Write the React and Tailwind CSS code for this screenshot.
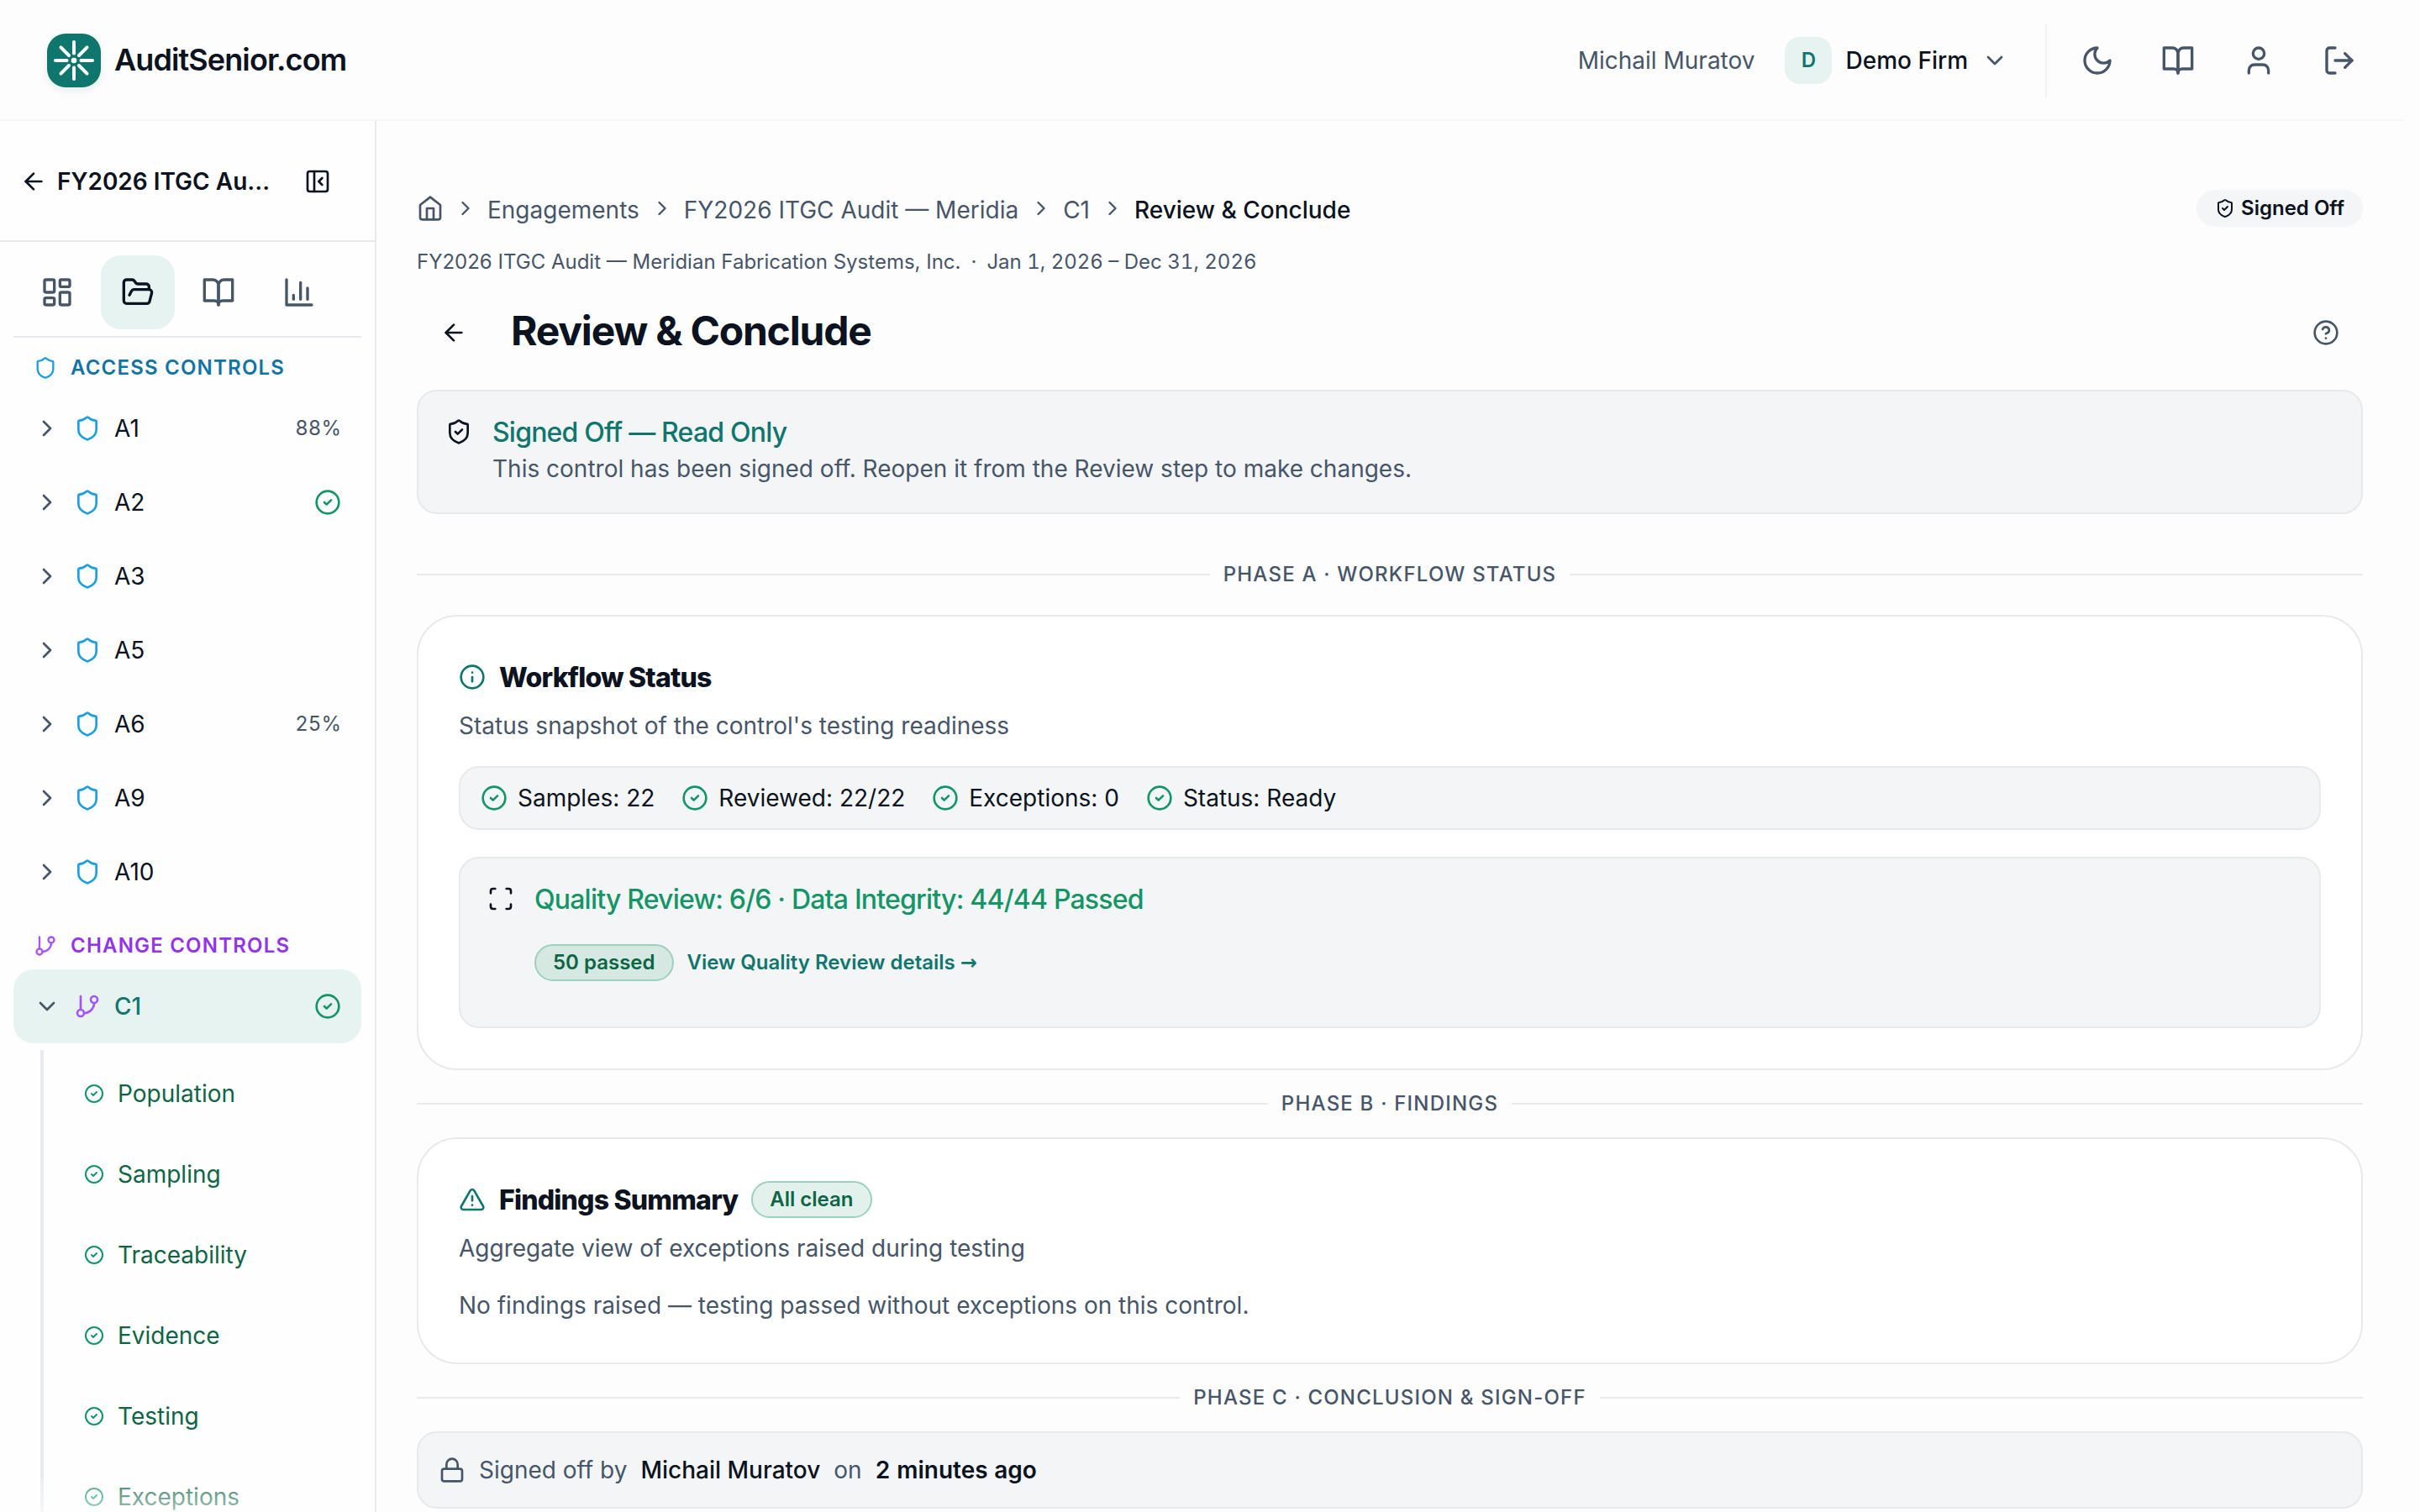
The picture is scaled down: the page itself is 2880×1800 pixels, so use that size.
import {
  ArrowLeft,
  ChevronDown,
  ChevronRight,
  CircleCheck,
  CircleQuestionMark,
  FolderOpen,
  Info,
  LayoutDashboard,
  Lock,
  LogOut,
  PanelLeftClose,
  Scan,
  Shield,
  ShieldCheck,
  TriangleAlert,
  User,
} from "lucide-react";

const accessControls = [
  { id: "A1", progress: "88%" },
  { id: "A2", done: true },
  { id: "A3" },
  { id: "A5" },
  { id: "A6", progress: "25%" },
  { id: "A9" },
  { id: "A10" },
];

const steps = [
  "Population",
  "Sampling",
  "Traceability",
  "Evidence",
  "Testing",
  "Exceptions",
];

const crumbs = ["Engagements", "FY2026 ITGC Audit — Meridia", "C1"];

const stats = ["Samples: 22", "Reviewed: 22/22", "Exceptions: 0", "Status: Ready"];

function Icon({ className, children }) {
  return (
    <svg
      viewBox="0 0 24 24"
      className={`shrink-0 ${className}`}
      fill="none"
      stroke="currentColor"
      strokeWidth="2"
      strokeLinecap="round"
      strokeLinejoin="round"
    >
      {children}
    </svg>
  );
}

function BookIcon({ className }) {
  return (
    <Icon className={className}>
      <path d="M2 3h6a4 4 0 0 1 4 4v14a3 3 0 0 0-3-3H2z" />
      <path d="M22 3h-6a4 4 0 0 0-4 4v14a3 3 0 0 1 3-3h7z" />
    </Icon>
  );
}

function MoonIcon({ className }) {
  return (
    <Icon className={className}>
      <path d="M12 3a6 6 0 0 0 9 9 9 9 0 1 1-9-9Z" />
    </Icon>
  );
}

function HomeIcon({ className }) {
  return (
    <Icon className={className}>
      <path d="m3 9 9-7 9 7v11a2 2 0 0 1-2 2H5a2 2 0 0 1-2-2z" />
      <path d="M9 22V12h6v10" />
    </Icon>
  );
}

function ChartIcon({ className }) {
  return (
    <Icon className={className}>
      <path d="M3 3v18h18" />
      <path d="M18 17V9" />
      <path d="M13 17V5" />
      <path d="M8 17v-3" />
    </Icon>
  );
}

function BranchIcon({ className }) {
  return (
    <Icon className={className}>
      <path d="M6 3v12" />
      <circle cx="18" cy="6" r="3" />
      <circle cx="6" cy="18" r="3" />
      <path d="M18 9a9 9 0 0 1-9 9" />
    </Icon>
  );
}

function Logo() {
  return (
    <div className="size-16 rounded-[22px] bg-[#0f766e] shadow-[0_4px_10px_rgba(15,23,42,0.08)]">
      <svg viewBox="0 0 64 64" className="size-16" fill="none" stroke="white" strokeWidth="4" strokeLinecap="round">
        {[0, 45, 90, 135, 180, 225, 270, 315].map((angle) => (
          <line key={angle} x1="32" y1="10" x2="32" y2="23.5" transform={`rotate(${angle} 32 32)`} />
        ))}
        <circle cx="32" cy="32" r="3.3" fill="white" stroke="none" />
      </svg>
    </div>
  );
}

function Header() {
  return (
    <header className="flex h-36 w-[2860px] shrink-0 items-center justify-between pl-14 pr-8 shadow-[inset_0_-2px_0_#f5f5f6]">
      <div className="flex items-center gap-4">
        <Logo />
        <span className="pb-0.5 text-[36px] font-semibold tracking-tight text-[#0b1220]">
          AuditSenior.com
        </span>
      </div>
      <div className="flex items-center">
        <span className="mr-9 text-[28px] text-[#475569]">Michail Muratov</span>
        <span className="flex size-14 items-center justify-center rounded-[18px] bg-[#e7f3f1] text-2xl font-semibold text-[#0f766e]">
          D
        </span>
        <span className="ml-4 mr-4 text-[28px] font-medium text-[#0b1220]">Demo Firm</span>
        <ChevronDown className="size-8 text-[#475569]" />
        <div className="ml-11 mr-4 h-22 w-0.5 bg-[#f1f2f4]" />
        <div className="flex gap-2 text-[#475569]">
          {[MoonIcon, BookIcon, User, LogOut].map((ActionIcon, i) => (
            <button key={i} className="flex size-22 items-center justify-center">
              <ActionIcon className="size-10" />
            </button>
          ))}
        </div>
      </div>
    </header>
  );
}

function SectionLabel({ icon: LabelIcon, iconColor, color, children }) {
  return (
    <div className={`flex h-14 items-center gap-4 pl-6 text-2xl font-semibold tracking-[0.05em] uppercase ${color}`}>
      <LabelIcon className={`size-7 ${iconColor}`} />
      {children}
    </div>
  );
}

function Sidebar() {
  return (
    <aside className="relative flex w-112 shrink-0 flex-col overflow-hidden border-r-2 border-[#e7e9eb] bg-[#fefefe]">
      <div className="flex h-36 shrink-0 items-center border-b-2 border-[#e7e9eb] pt-0.5 pl-6">
        <ArrowLeft className="size-8 text-[#0b1220]" />
        <span className="ml-3 w-[256px] text-[28px] font-semibold whitespace-nowrap text-[#0b1220]">
          FY2026 ITGC Au...
        </span>
        <PanelLeftClose className="ml-[38px] size-8 text-[#0b1220]" />
      </div>
      <nav className="px-4 pt-4">
        <div className="flex gap-2 border-b-2 border-[#e7e9ee] px-2 pb-2 text-[#475569]">
          {[LayoutDashboard, FolderOpen, BookIcon, ChartIcon].map((TabIcon, i) => (
            <button
              key={i}
              className={`flex size-22 items-center justify-center rounded-3xl ${
                i === 1 ? "bg-[#e7f3f1] text-[#0b1220]" : ""
              }`}
            >
              <TabIcon className="size-10" />
            </button>
          ))}
        </div>
        <div className="pt-2">
          <SectionLabel icon={Shield} iconColor="text-[#1c9fe0]" color="text-[#1174a4]">
            Access Controls
          </SectionLabel>
          {accessControls.map(({ id, progress, done }) => (
            <div key={id} className="flex h-22 items-center gap-4 px-6">
              <ChevronRight className="size-8 text-[#475569]" />
              <Shield className="size-8 text-[#1c9fe0]" />
              <span className="flex-1 text-[28px] text-[#0b1220]">{id}</span>
              {progress && (
                <span className="text-2xl text-[#475569] tabular-nums">{progress}</span>
              )}
              {done && <CircleCheck className="size-8 text-[#139566]" />}
            </div>
          ))}
        </div>
        <div className="pt-4">
          <SectionLabel icon={BranchIcon} iconColor="text-[#a855f7]" color="text-[#9333ea]">
            Change Controls
          </SectionLabel>
          <div className="flex h-22 items-center gap-4 rounded-3xl bg-[#e7f3f1] px-6">
            <ChevronDown className="size-8 text-[#475569]" />
            <BranchIcon className="size-8 text-[#a855f7]" />
            <span className="flex-1 text-[28px] font-medium text-[#0f766e]">C1</span>
            <CircleCheck className="size-8 text-[#139566]" />
          </div>
          <div className="mt-2 ml-8 flex flex-col gap-2 border-l-4 border-[#e8eaef] pt-2 pl-12">
            {steps.map((step) => (
              <div key={step} className="flex h-22 items-center gap-4">
                <CircleCheck className="size-6 text-[#139566]" />
                <span className="text-[28px] text-[#0d6546]">{step}</span>
              </div>
            ))}
          </div>
        </div>
      </nav>
      <div className="absolute inset-x-0 bottom-0 h-10 bg-linear-to-b from-[#fefefe]/20 to-[#fefefe]/60" />
    </aside>
  );
}

function PhaseDivider({ children, className }) {
  return (
    <div className={`flex h-8 items-center gap-4 ${className}`}>
      <div className="h-0.5 flex-1 bg-[#e7e9eb]" />
      <span className="text-2xl font-medium tracking-[0.05em] text-[#475569] uppercase">
        {children}
      </span>
      <div className="h-0.5 flex-1 bg-[#e7e9eb]" />
    </div>
  );
}

function SuccessBadge({ children, className }) {
  return (
    <span
      className={`flex h-11 items-center rounded-full border-2 border-[#9bd1bd] px-5 text-2xl font-semibold text-[#0d6546] ${className}`}
    >
      {children}
    </span>
  );
}

function Main() {
  return (
    <main className="flex w-[2412px] flex-col px-12 pt-[82px]">
      <div className="flex h-11 items-center justify-between">
        <div className="flex items-center gap-3 text-[28px] text-[#475569]">
          <HomeIcon className="size-8" />
          {crumbs.map((crumb) => (
            <div key={crumb} className="flex items-center gap-3">
              <ChevronRight className="size-7" />
              <span className="pt-1 pr-px">{crumb}</span>
            </div>
          ))}
          <ChevronRight className="size-7" />
          <span className="pt-1 font-medium text-[#0b1220]">Review &amp; Conclude</span>
        </div>
        <span className="flex h-11 items-center gap-[7px] rounded-full bg-[#f3f5f7] px-[22px] text-2xl font-semibold text-[#0b1220]">
          <ShieldCheck className="size-6" />
          Signed Off
        </span>
      </div>
      <p className="mt-[26px] text-2xl text-[#475569]">
        FY2026 ITGC Audit — Meridian Fabrication Systems, Inc.
        <span className="mx-3">·</span>
        <span className="tabular-nums">Jan 1, 2026 – Dec 31, 2026</span>
      </p>
      <div className="mt-6 flex h-22 items-center">
        <button className="flex size-22 items-center justify-center">
          <ArrowLeft className="size-8 text-[#0b1220]" />
        </button>
        <h1 className="ml-6 flex-1 pb-1 text-5xl font-bold tracking-tight text-[#0b1220]">
          Review &amp; Conclude
        </h1>
        <button className="flex size-22 items-center justify-center">
          <CircleQuestionMark className="size-8 text-[#475569]" />
        </button>
      </div>

      <div className="mt-6 flex h-37 gap-6 rounded-3xl border-2 border-[#e7e9eb] bg-[#f3f5f7] p-8">
        <ShieldCheck className="size-8 text-[#0b1220]" />
        <div>
          <h2 className="text-[32px] leading-[34px] font-medium tracking-tight text-[#0f766e]">
            Signed Off — Read Only
          </h2>
          <p className="mt-1.5 text-[28px] leading-10 text-[#475569]">
            This control has been signed off. Reopen it from the Review step to make changes.
          </p>
        </div>
      </div>

      <PhaseDivider className="mt-14 mb-8">Phase A · Workflow Status</PhaseDivider>

      <section className="rounded-[48px] border-2 border-[#e7e9eb] bg-white p-12">
        <div className="flex h-12 items-center gap-4">
          <Info className="size-8 text-[#0f766e]" />
          <h3 className="pt-px text-[32px] font-extrabold tracking-tight text-[#0b1220]">Workflow Status</h3>
        </div>
        <p className="mt-2.5 text-[28px] leading-12 text-[#475569]">
          Status snapshot of the control's testing readiness
        </p>
        <div className="mt-6 flex h-19 items-center gap-8 rounded-3xl border-2 border-[#e7e9eb] bg-[#f3f5f7] px-6">
          {stats.map((stat) => (
            <div key={stat} className="flex items-center gap-3 text-[28px] text-[#0b1220]">
              <CircleCheck className="size-8 text-[#139566]" />
              {stat}
            </div>
          ))}
        </div>
        <div className="mt-8 flex h-51 gap-6 rounded-3xl border-2 border-[#e7e9eb] bg-[#f3f5f7] p-8">
          <Scan className="size-8 text-[#0b1220]" />
          <div>
            <h4 className="text-[32px] leading-[34px] font-medium tracking-tight text-[#139566]">
              Quality Review: 6/6 · Data Integrity: 44/44 Passed
            </h4>
            <div className="mt-9 flex items-center gap-4">
              <SuccessBadge className="bg-[#d5e8e2]">50 passed</SuccessBadge>
              <a className="text-2xl font-semibold text-[#0f766e]">
                View Quality Review details{" "}
                <span className="font-['DejaVu_Sans',sans-serif] font-bold">→</span>
              </a>
            </div>
          </div>
        </div>
      </section>

      <PhaseDivider className="my-6">Phase B · Findings</PhaseDivider>

      <section className="h-[270px] rounded-[48px] border-2 border-[#e7e9eb] bg-white p-12">
        <div className="flex h-12 items-center gap-4">
          <TriangleAlert className="size-8 text-[#0f766e]" />
          <h3 className="pt-px text-[32px] font-extrabold tracking-tight text-[#0b1220]">Findings Summary</h3>
          <SuccessBadge className="bg-[#e2f1ec]">All clean</SuccessBadge>
        </div>
        <p className="mt-2.5 text-[28px] leading-12 text-[#475569]">
          Aggregate view of exceptions raised during testing
        </p>
        <p className="mt-5 text-[28px] leading-12 text-[#475569]">
          No findings raised — testing passed without exceptions on this control.
        </p>
      </section>

      <PhaseDivider className="my-6">Phase C · Conclusion &amp; Sign-off</PhaseDivider>

      <div className="flex h-23 shrink-0 items-center gap-4 rounded-3xl border-2 border-[#e7e9eb] bg-[#f3f5f7] px-6 text-[28px] text-[#475569]">
        <Lock className="size-8" />
        <span>Signed off by</span>
        <span className="font-medium text-[#0b1220]">Michail Muratov</span>
        <span>on</span>
        <span className="font-semibold text-[#0b1220] tabular-nums">2 minutes ago</span>
      </div>
    </main>
  );
}

export default function App() {
  return (
    <div className="flex h-[1800px] w-[2880px] flex-col overflow-hidden bg-[#fdfdfd] font-['Inter',sans-serif]">
      <Header />
      <div className="flex min-h-0 flex-1">
        <Sidebar />
        <Main />
      </div>
    </div>
  );
}
